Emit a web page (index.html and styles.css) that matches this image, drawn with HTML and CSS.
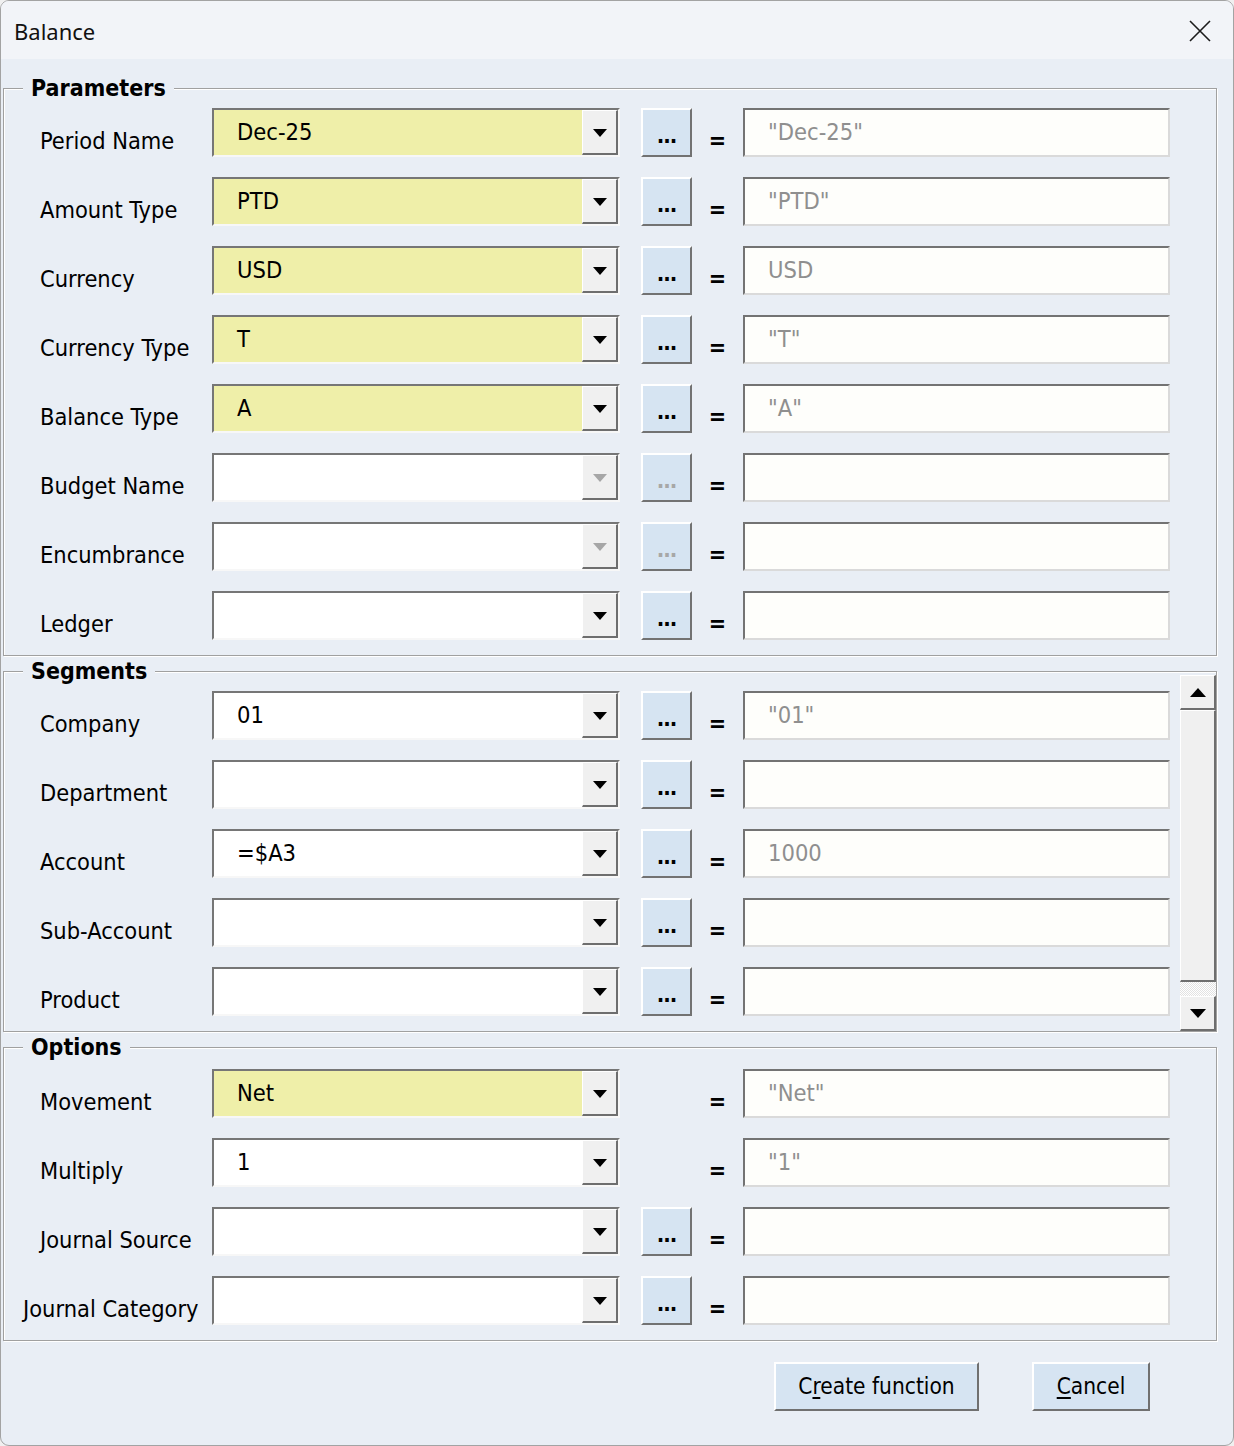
FILE: index.html
```html
<!DOCTYPE html>
<html lang="en">
<head>
    <meta charset="UTF-8">
    <title>Balance</title>
    <link rel="stylesheet" href="styles.css">
</head>
<body>
    <div class="window">
        <div class="titlebar">
            <span class="title">Balance</span>
            <svg class="close" width="22" height="22" viewBox="0 0 22 22"><path d="M1 1 L21 21 M21 1 L1 21" stroke="#1b1b1b" stroke-width="1.6" fill="none"/></svg>
        </div>

        <div class="content">
            <!-- Parameters -->
            <fieldset class="group group--params">
                <legend>Parameters</legend>
                <div class="rows">
                    <div class="row">
                        <div class="label">Period Name</div>
                        <div class="combo combo--yellow"><span class="combo-text">Dec-25</span><span class="arrow"></span></div>
                        <div class="dots">...</div>
                        <div class="eq">=</div>
                        <div class="result">"Dec-25"</div>
                    </div>
                    <div class="row">
                        <div class="label">Amount Type</div>
                        <div class="combo combo--yellow"><span class="combo-text">PTD</span><span class="arrow"></span></div>
                        <div class="dots">...</div>
                        <div class="eq">=</div>
                        <div class="result">"PTD"</div>
                    </div>
                    <div class="row">
                        <div class="label">Currency</div>
                        <div class="combo combo--yellow"><span class="combo-text">USD</span><span class="arrow"></span></div>
                        <div class="dots">...</div>
                        <div class="eq">=</div>
                        <div class="result">USD</div>
                    </div>
                    <div class="row">
                        <div class="label">Currency Type</div>
                        <div class="combo combo--yellow"><span class="combo-text">T</span><span class="arrow"></span></div>
                        <div class="dots">...</div>
                        <div class="eq">=</div>
                        <div class="result">"T"</div>
                    </div>
                    <div class="row">
                        <div class="label">Balance Type</div>
                        <div class="combo combo--yellow"><span class="combo-text">A</span><span class="arrow"></span></div>
                        <div class="dots">...</div>
                        <div class="eq">=</div>
                        <div class="result">"A"</div>
                    </div>
                    <div class="row">
                        <div class="label">Budget Name</div>
                        <div class="combo combo--disabled"><span class="combo-text"></span><span class="arrow"></span></div>
                        <div class="dots dots--disabled">...</div>
                        <div class="eq">=</div>
                        <div class="result"></div>
                    </div>
                    <div class="row">
                        <div class="label">Encumbrance</div>
                        <div class="combo combo--disabled"><span class="combo-text"></span><span class="arrow"></span></div>
                        <div class="dots dots--disabled">...</div>
                        <div class="eq">=</div>
                        <div class="result"></div>
                    </div>
                    <div class="row">
                        <div class="label">Ledger</div>
                        <div class="combo"><span class="combo-text"></span><span class="arrow"></span></div>
                        <div class="dots">...</div>
                        <div class="eq">=</div>
                        <div class="result"></div>
                    </div>
                </div>
            </fieldset>

            <!-- Segments -->
            <fieldset class="group group--segments">
                <legend>Segments</legend>
                <div class="seg-wrap">
                    <div class="rows">
                        <div class="row">
                            <div class="label">Company</div>
                            <div class="combo"><span class="combo-text">01</span><span class="arrow"></span></div>
                            <div class="dots">...</div>
                            <div class="eq">=</div>
                            <div class="result">"01"</div>
                        </div>
                        <div class="row">
                            <div class="label">Department</div>
                            <div class="combo"><span class="combo-text"></span><span class="arrow"></span></div>
                            <div class="dots">...</div>
                            <div class="eq">=</div>
                            <div class="result"></div>
                        </div>
                        <div class="row">
                            <div class="label">Account</div>
                            <div class="combo"><span class="combo-text">=$A3</span><span class="arrow"></span></div>
                            <div class="dots">...</div>
                            <div class="eq">=</div>
                            <div class="result">1000</div>
                        </div>
                        <div class="row">
                            <div class="label">Sub-Account</div>
                            <div class="combo"><span class="combo-text"></span><span class="arrow"></span></div>
                            <div class="dots">...</div>
                            <div class="eq">=</div>
                            <div class="result"></div>
                        </div>
                        <div class="row">
                            <div class="label">Product</div>
                            <div class="combo"><span class="combo-text"></span><span class="arrow"></span></div>
                            <div class="dots">...</div>
                            <div class="eq">=</div>
                            <div class="result"></div>
                        </div>
                    </div>
                    <div class="vscroll">
                        <div class="sb-btn sb-up"></div>
                        <div class="sb-thumb"></div>
                        <div class="sb-track"></div>
                        <div class="sb-btn sb-down"></div>
                    </div>
                </div>
            </fieldset>

            <!-- Options -->
            <fieldset class="group group--options">
                <legend>Options</legend>
                <div class="rows">
                    <div class="row">
                        <div class="label">Movement</div>
                        <div class="combo combo--yellow"><span class="combo-text">Net</span><span class="arrow"></span></div>
                        <div class="dots-space"></div>
                        <div class="eq">=</div>
                        <div class="result">"Net"</div>
                    </div>
                    <div class="row">
                        <div class="label">Multiply</div>
                        <div class="combo"><span class="combo-text">1</span><span class="arrow"></span></div>
                        <div class="dots-space"></div>
                        <div class="eq">=</div>
                        <div class="result">"1"</div>
                    </div>
                    <div class="row">
                        <div class="label">Journal Source</div>
                        <div class="combo"><span class="combo-text"></span><span class="arrow"></span></div>
                        <div class="dots">...</div>
                        <div class="eq">=</div>
                        <div class="result"></div>
                    </div>
                    <div class="row">
                        <div class="label label--wide">Journal Category</div>
                        <div class="combo"><span class="combo-text"></span><span class="arrow"></span></div>
                        <div class="dots">...</div>
                        <div class="eq">=</div>
                        <div class="result"></div>
                    </div>
                </div>
            </fieldset>

            <div class="actions">
                <div class="btn btn--create">C<u>r</u>eate function</div>
                <div class="btn btn--cancel"><u>C</u>ancel</div>
            </div>
        </div>
    </div>
</body>
</html>
```

FILE: styles.css
```css
* {
    margin: 0;
    padding: 0;
    box-sizing: border-box;
}
body {
    background: #f0f0f0;
    font-family: "DejaVu Sans Condensed", "DejaVu Sans", sans-serif;
    color: #000;
}
.window {
    width: 1234px;
    height: 1446px;
    background: #e9eef5;
    border: 1px solid #a3a3a3;
    border-radius: 9px;
    overflow: hidden;
}
.titlebar {
    height: 58px;
    background: #f2f4f8;
    display: flex;
    align-items: center;
    justify-content: space-between;
    padding: 0 22px 0 13px;
}
.title {
    font-family: "Noto Sans", "Open Sans", sans-serif;
    font-size: 22px;
    color: #111;
    margin-top: 2px;
}
.close {
    margin-top: 2px;
}
.content {
    padding: 15px 16px 0 2px;
}

/* group boxes */
.group {
    border: 1px solid #a0a0a0;
    box-shadow: inset 1px 1px 0 #ffffff, 1px 1px 0 #ffffff;
    margin-bottom: 1px;
    min-width: 0;
}
.group legend {
    margin-left: 19px;
    padding: 0 8px 0 8px;
    font-size: 23px;
    font-weight: bold;
    line-height: 28px;
    background: #e9eef5;
}
.group--params .rows {
    padding: 6px 0 15px;
}
.group--segments .rows {
    padding: 6px 0 15px;
    flex: 1;
}
.group--options .rows {
    padding: 8px 0 15px;
}
.seg-wrap {
    display: flex;
}

/* rows */
.row {
    display: flex;
    align-items: stretch;
    height: 49px;
    margin-bottom: 20px;
    padding-left: 36px;
}
.row:last-child {
    margin-bottom: 0;
}
.label {
    width: 172px;
    flex-shrink: 0;
    font-size: 23.4px;
    padding-top: 19px;
    white-space: nowrap;
}
.label--wide {
    margin-left: -17px;
    width: 189px;
}

/* combo box */
.combo {
    width: 408px;
    flex-shrink: 0;
    display: flex;
    background: #ffffff;
    border-style: solid;
    border-width: 2px;
    border-color: #767676 #f7f7f7 #f7f7f7 #767676;
}
.combo--yellow {
    background: #efefa9;
}
.combo-text {
    flex: 1;
    font-size: 23.5px;
    padding: 8px 0 0 23px;
}
.arrow {
    width: 36px;
    background: #f0f0f0;
    border-style: solid;
    border-width: 1px 2px 2px 1px;
    border-color: #ffffff #6e6e6e #6e6e6e #ffffff;
    display: flex;
    align-items: center;
    justify-content: center;
}
.arrow::after {
    content: "";
    margin-top: 2px;
    border-left: 7px solid transparent;
    border-right: 7px solid transparent;
    border-top: 8px solid #000;
}
.combo--disabled .arrow::after {
    border-top-color: #a6a6a6;
}

/* ... button */
.dots, .dots-space {
    width: 51px;
    flex-shrink: 0;
    margin-left: 21px;
}
.dots {
    background: #d6e4f2;
    border-style: solid;
    border-width: 2px;
    border-color: #ffffff #727272 #727272 #ffffff;
    font-size: 22px;
    font-weight: bold;
    text-align: center;
    line-height: 38px;
    padding-top: 7px;
    letter-spacing: -1px;
}
.dots--disabled {
    color: #a7a7a7;
}
.eq {
    width: 51px;
    flex-shrink: 0;
    text-align: center;
    font-size: 23px;
    font-weight: bold;
    padding-top: 19px;
}

/* result box */
.result {
    width: 427px;
    flex-shrink: 0;
    background: #fefefb;
    border-style: solid;
    border-width: 2px;
    border-color: #737373 #dadada #dadada #737373;
    font-size: 23.5px;
    color: #8f8f8f;
    padding: 8px 0 0 23px;
}

/* scrollbar */
.vscroll {
    width: 36px;
    margin-top: -10px;
    margin-left: 8px;
    display: flex;
    flex-direction: column;
    background: #f2f2f2;
}
.sb-btn, .sb-thumb {
    background: #f0f0f0;
    border-style: solid;
    border-width: 1px 2px 2px 1px;
    border-color: #ffffff #6e6e6e #6e6e6e #ffffff;
}
.sb-btn {
    height: 35px;
    display: flex;
    align-items: center;
    justify-content: center;
}
.sb-up::after {
    content: "";
    border-left: 8px solid transparent;
    border-right: 8px solid transparent;
    border-bottom: 9px solid #000;
}
.sb-down::after {
    content: "";
    border-left: 8px solid transparent;
    border-right: 8px solid transparent;
    border-top: 9px solid #000;
}
.sb-thumb {
    flex: 1;
}
.sb-track {
    height: 14px;
    background: repeating-conic-gradient(#ffffff 0 25%, #e2e2e2 0 50%) 0 0 / 2px 2px;
}

/* bottom buttons */
.actions {
    display: flex;
    justify-content: flex-end;
    gap: 53px;
    padding: 20px 67px 0 0;
}
.btn {
    height: 49px;
    background: #d6e4f2;
    border-style: solid;
    border-width: 2px;
    border-color: #ffffff #707070 #707070 #ffffff;
    font-size: 22.5px;
    text-align: center;
    line-height: 44px;
}
.btn--create {
    width: 205px;
}
.btn--cancel {
    width: 118px;
}
.btn u {
    text-underline-offset: 3px;
}
```
